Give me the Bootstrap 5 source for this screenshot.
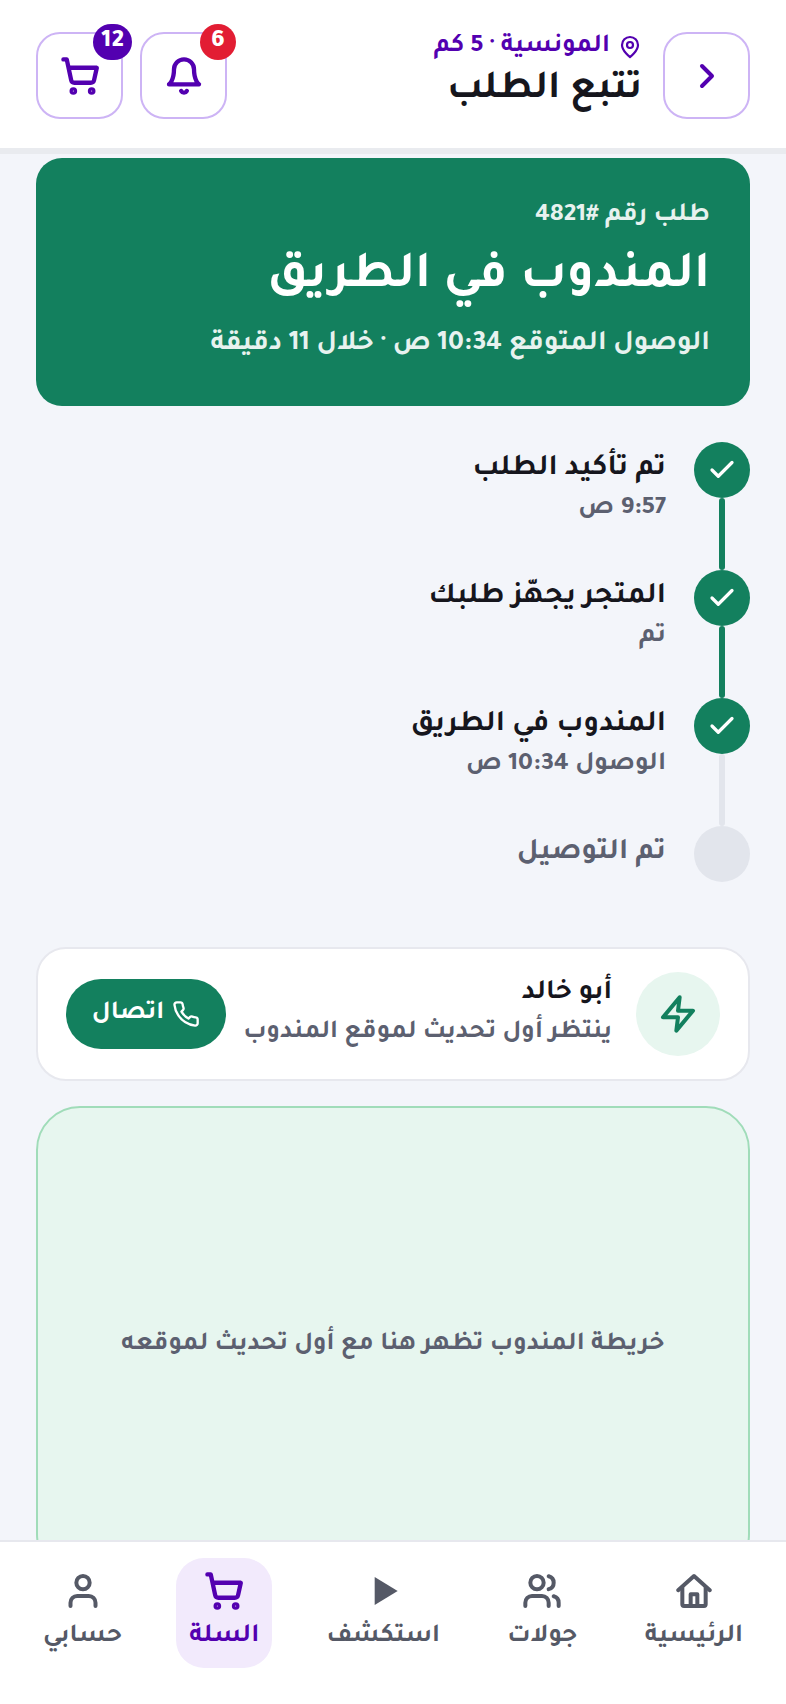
<!DOCTYPE html>
<html lang="ar" dir="rtl">
<head>
    <meta charset="UTF-8">
    <meta name="viewport" content="width=device-width, initial-scale=1.0">
    <title>تتبع الطلب</title>
    <link href="https://cdn.jsdelivr.net/npm/bootstrap@5.3.2/dist/css/bootstrap.min.css" rel="stylesheet">
    <style>
        html, body { height: 100%; }
        body { background: #f3f5fa; font-family: "Tajawal", "Noto Sans Arabic", "DejaVu Sans", sans-serif; color: #16161d; overflow: hidden; }
        .app-shell { height: 1704px; }
        .top-bar { height: 154px; padding: 32px 36px 0; background: #fff; border-bottom: 6px solid #e9ebef; }
        .top-actions { gap: 17px; }
        .title-group { gap: 21px; }
        .square-btn { width: 87px; height: 87px; border: 2px solid #cdb4f5; border-radius: 24px; background: #fff; color: #5300b0; padding: 0; }
        .square-btn svg { width: 40px; height: 40px; }
        .count-badge { position: absolute; top: -10px; right: -11px; width: 36px; height: 36px; border-radius: 18px; font-size: 26px; font-weight: 800; line-height: 36px; color: #fff; text-align: center; }
        .count-badge.wide-count { width: 39px; }
        .bg-plum { background: #5300b0; }
        .bg-alert { background: #e21d33; }
        .place-line { font-size: 26px; font-weight: 700; color: #5300b0; line-height: 30px; }
        .place-line svg { width: 24px; height: 24px; }
        .page-title { font-size: 40px; font-weight: 700; line-height: 46px; margin: 6px 0 0; }
        .main-area { padding: 4px 36px 0; height: 1386px; overflow: hidden; }
        .status-card { height: 248px; padding: 42px 40px 0; border-radius: 26px; background: #13805e; color: #fff; }
        .status-num { font-size: 26.5px; font-weight: 700; line-height: 32px; opacity: .9; }
        .status-title { font-size: 52px; font-weight: 700; line-height: 62px; margin: 16px 0 18px; }
        .status-eta { font-size: 28.2px; font-weight: 700; line-height: 34px; opacity: .9; }
        .track-list { margin-top: 36px; }
        .track-row { height: 128px; gap: 28px; }
        .track-row:last-child { height: 56px; }
        .track-side { width: 56px; }
        .track-dot { width: 56px; height: 56px; border-radius: 50%; background: #13805e; color: #fff; }
        .track-dot svg { width: 30px; height: 30px; }
        .track-dot.waiting { background: #e2e5ec; }
        .track-line { width: 6px; height: 72px; background: #13805e; border-radius: 3px; }
        .track-line.waiting { background: #e2e5ec; }
        .track-name { font-size: 30px; font-weight: 700; line-height: 44px; padding-top: 6px; }
        .track-name.waiting { color: #5c6070; }
        .track-time { font-size: 26.5px; font-weight: 700; color: #5c6070; line-height: 34px; }
        .driver-card { height: 134px; margin-top: 65px; padding: 0 28px 0 28px; background: #fff; border: 2px solid #e7e8ee; border-radius: 30px; }
        .driver-icon { width: 84px; height: 84px; border-radius: 50%; background: #e7f6ef; color: #13805e; }
        .driver-icon svg { width: 40px; height: 40px; }
        .driver-name { font-size: 28px; font-weight: 700; line-height: 36px; }
        .driver-note { font-size: 26px; font-weight: 700; color: #5c6070; line-height: 38px; margin-top: 2px; }
        .call-btn { width: 160px; height: 70px; border-radius: 35px; background: #13805e; color: #fff; border: 0; font-size: 26px; font-weight: 700; }
        .call-btn svg { width: 28px; height: 28px; }
        .call-btn:hover { background: #13805e; color: #fff; }
        .map-box { height: 472px; margin-top: 25px; padding-top: 6px; background: #e7f6ef; border: 2px solid #a0dcb9; border-radius: 44px; font-size: 26px; font-weight: 700; color: #5c6070; }
        .bottom-nav { height: 164px; padding: 16px 30px 0; background: #fff; border-top: 2px solid #e7e8ee; align-items: flex-start; }
        .tab-item { height: 110px; padding: 0 13px; border-radius: 28px; color: #555966; font-size: 26px; font-weight: 700; white-space: nowrap; }
        .tab-item svg { width: 40px; height: 40px; margin-top: 13px; margin-bottom: 7px; }
        .tab-item.current { background: #f2eafc; color: #5300b0; font-size: 26.5px; }
    </style>
</head>
<body>
<div class="app-shell d-flex flex-column">
    <header class="top-bar d-flex justify-content-between align-items-start">
        <div class="title-group d-flex align-items-start">
            <button class="btn square-btn d-flex align-items-center justify-content-center" type="button">
                <svg viewBox="0 0 24 24" fill="none" stroke="currentColor" stroke-width="2.4" stroke-linecap="round" stroke-linejoin="round"><path d="m9 18 6-6-6-6"/></svg>
            </button>
            <div>
                <div class="place-line d-flex align-items-center gap-2">
                    <svg viewBox="0 0 24 24" fill="none" stroke="currentColor" stroke-width="2.2" stroke-linecap="round" stroke-linejoin="round"><path d="M20 10c0 6-8 12-8 12s-8-6-8-12a8 8 0 0 1 16 0Z"/><circle cx="12" cy="10" r="3"/></svg>
                    <span>المونسية · 5 كم</span>
                </div>
                <h1 class="page-title">تتبع الطلب</h1>
            </div>
        </div>
        <div class="top-actions d-flex">
            <button class="btn square-btn position-relative d-flex align-items-center justify-content-center" type="button">
                <svg viewBox="0 0 24 24" fill="none" stroke="currentColor" stroke-width="2.6" stroke-linecap="round" stroke-linejoin="round"><path d="M6 8a6 6 0 0 1 12 0c0 7 3 9 3 9H3s3-2 3-9"/><path d="M10.3 21a1.94 1.94 0 0 0 3.4 0"/></svg>
                <span class="count-badge bg-alert">6</span>
            </button>
            <button class="btn square-btn position-relative d-flex align-items-center justify-content-center" type="button">
                <svg viewBox="0 0 24 24" fill="none" stroke="currentColor" stroke-width="2.6" stroke-linecap="round" stroke-linejoin="round"><circle cx="8" cy="21" r="1"/><circle cx="19" cy="21" r="1"/><path d="M2.05 2.05h2l2.66 12.42a2 2 0 0 0 2 1.58h9.78a2 2 0 0 0 1.95-1.57l1.65-7.43H5.12"/></svg>
                <span class="count-badge wide-count bg-plum">12</span>
            </button>
        </div>
    </header>

    <main class="main-area flex-grow-1">
        <section class="status-card">
            <div class="status-num">طلب رقم #4821</div>
            <div class="status-title">المندوب في الطريق</div>
            <div class="status-eta">الوصول المتوقع 10:34 ص · خلال 11 دقيقة</div>
        </section>

        <section class="track-list">
            <div class="track-row d-flex">
                <div class="track-side d-flex flex-column align-items-center">
                    <div class="track-dot d-flex align-items-center justify-content-center flex-shrink-0"><svg viewBox="0 0 24 24" fill="none" stroke="currentColor" stroke-width="2.6" stroke-linecap="round" stroke-linejoin="round"><path d="M20 6 9 17l-5-5"/></svg></div>
                    <div class="track-line"></div>
                </div>
                <div>
                    <div class="track-name">تم تأكيد الطلب</div>
                    <div class="track-time">9:57 ص</div>
                </div>
            </div>
            <div class="track-row d-flex">
                <div class="track-side d-flex flex-column align-items-center">
                    <div class="track-dot d-flex align-items-center justify-content-center flex-shrink-0"><svg viewBox="0 0 24 24" fill="none" stroke="currentColor" stroke-width="2.6" stroke-linecap="round" stroke-linejoin="round"><path d="M20 6 9 17l-5-5"/></svg></div>
                    <div class="track-line"></div>
                </div>
                <div>
                    <div class="track-name">المتجر يجهّز طلبك</div>
                    <div class="track-time">تم</div>
                </div>
            </div>
            <div class="track-row d-flex">
                <div class="track-side d-flex flex-column align-items-center">
                    <div class="track-dot d-flex align-items-center justify-content-center flex-shrink-0"><svg viewBox="0 0 24 24" fill="none" stroke="currentColor" stroke-width="2.6" stroke-linecap="round" stroke-linejoin="round"><path d="M20 6 9 17l-5-5"/></svg></div>
                    <div class="track-line waiting"></div>
                </div>
                <div>
                    <div class="track-name">المندوب في الطريق</div>
                    <div class="track-time">الوصول 10:34 ص</div>
                </div>
            </div>
            <div class="track-row d-flex">
                <div class="track-side d-flex flex-column align-items-center">
                    <div class="track-dot waiting"></div>
                </div>
                <div>
                    <div class="track-name waiting">تم التوصيل</div>
                </div>
            </div>
        </section>

        <section class="driver-card d-flex align-items-center justify-content-between">
            <div class="d-flex align-items-center gap-4">
                <div class="driver-icon d-flex align-items-center justify-content-center flex-shrink-0">
                    <svg viewBox="0 0 24 24" fill="none" stroke="currentColor" stroke-width="2.4" stroke-linecap="round" stroke-linejoin="round"><path d="M13 2 3 14h9l-1 8 10-12h-9z"/></svg>
                </div>
                <div>
                    <div class="driver-name">أبو خالد</div>
                    <div class="driver-note">ينتظر أول تحديث لموقع المندوب</div>
                </div>
            </div>
            <button class="btn call-btn d-flex align-items-center justify-content-center gap-2" type="button">
                <svg viewBox="0 0 24 24" fill="none" stroke="currentColor" stroke-width="2" stroke-linecap="round" stroke-linejoin="round"><path d="M22 16.92v3a2 2 0 0 1-2.18 2 19.79 19.79 0 0 1-8.63-3.07 19.5 19.5 0 0 1-6-6 19.79 19.79 0 0 1-3.07-8.67A2 2 0 0 1 4.11 2h3a2 2 0 0 1 2 1.72 12.84 12.84 0 0 0 .7 2.81 2 2 0 0 1-.45 2.11L8.09 9.91a16 16 0 0 0 6 6l1.27-1.27a2 2 0 0 1 2.11-.45 12.84 12.84 0 0 0 2.81.7A2 2 0 0 1 22 16.92z"/></svg>
                <span>اتصال</span>
            </button>
        </section>

        <section class="map-box d-flex align-items-center justify-content-center">خريطة المندوب تظهر هنا مع أول تحديث لموقعه</section>
    </main>

    <nav class="bottom-nav d-flex justify-content-between flex-shrink-0">
        <a class="tab-item d-flex flex-column align-items-center text-decoration-none">
            <svg viewBox="0 0 24 24" fill="none" stroke="currentColor" stroke-width="2.4" stroke-linecap="round" stroke-linejoin="round"><path d="M2.5 11.5 12 3l9.5 8.5"/><path d="M5 10v10a1 1 0 0 0 1 1h12a1 1 0 0 0 1-1V10"/><path d="M10 21v-7h4v7"/></svg>
            <span>الرئيسية</span>
        </a>
        <a class="tab-item d-flex flex-column align-items-center text-decoration-none">
            <svg viewBox="0 0 24 24" fill="none" stroke="currentColor" stroke-width="2.4" stroke-linecap="round" stroke-linejoin="round"><path d="M16 21v-2a4 4 0 0 0-4-4H6a4 4 0 0 0-4 4v2"/><circle cx="9" cy="7" r="4"/><path d="M22 21v-2a4 4 0 0 0-3-3.87"/><path d="M16 3.13a4 4 0 0 1 0 7.75"/></svg>
            <span>جولات</span>
        </a>
        <a class="tab-item d-flex flex-column align-items-center text-decoration-none">
            <svg viewBox="0 0 24 24" fill="currentColor"><path d="M7 3.6v16.8L20.8 12z"/></svg>
            <span>استكشف</span>
        </a>
        <a class="tab-item current d-flex flex-column align-items-center text-decoration-none">
            <svg viewBox="0 0 24 24" fill="none" stroke="currentColor" stroke-width="2.6" stroke-linecap="round" stroke-linejoin="round"><circle cx="8" cy="21" r="1"/><circle cx="19" cy="21" r="1"/><path d="M2.05 2.05h2l2.66 12.42a2 2 0 0 0 2 1.58h9.78a2 2 0 0 0 1.95-1.57l1.65-7.43H5.12"/></svg>
            <span>السلة</span>
        </a>
        <a class="tab-item d-flex flex-column align-items-center text-decoration-none">
            <svg viewBox="0 0 24 24" fill="none" stroke="currentColor" stroke-width="2.4" stroke-linecap="round" stroke-linejoin="round"><path d="M19.5 21v-2a4 4 0 0 0-4-4h-7a4 4 0 0 0-4 4v2"/><circle cx="12" cy="7" r="4"/></svg>
            <span>حسابي</span>
        </a>
    </nav>
</div>
<script src="https://cdn.jsdelivr.net/npm/bootstrap@5.3.2/dist/js/bootstrap.bundle.min.js"></script>
</body>
</html>
